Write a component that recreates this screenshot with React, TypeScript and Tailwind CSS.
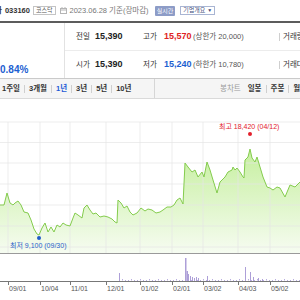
import React from 'react';

const FONT = "font-['Liberation_Sans','Noto_Sans_CJK_KR',sans-serif]";

const pts: [number, number][] = [
  [0, 205], [4, 205], [7, 193], [10, 203], [13, 205], [15, 203], [18, 201], [21, 205],
  [24, 212], [28, 213], [31, 220], [34, 229], [37, 234], [39, 235], [42, 228], [45, 223],
  [48, 232], [51, 227], [54, 232], [57, 225], [60, 227], [63, 223], [66, 225], [70, 226],
  [73, 218], [75, 213], [78, 215], [82, 218], [84, 208], [87, 205], [90, 210], [93, 214],
  [96, 213], [100, 217], [104, 216], [108, 217], [112, 219], [115, 222], [117, 223], [118, 200],
  [121, 203], [124, 208], [127, 206], [130, 212], [133, 215], [137, 213], [141, 208], [145, 211],
  [148, 209], [152, 210], [156, 213], [160, 212], [163, 210], [167, 207], [171, 207], [174, 205],
  [177, 200], [180, 198], [183, 204], [185, 163], [188, 167], [192, 172], [195, 170], [198, 177],
  [202, 172], [204, 177], [207, 162], [210, 170], [213, 180], [217, 193], [220, 182], [225, 177],
  [228, 172], [232, 170], [233, 167], [235, 170], [237, 168], [240, 172], [243, 177], [244, 178],
  [245, 160], [248, 157], [250, 149], [252, 158], [255, 162], [257, 157], [260, 167], [263, 177],
  [267, 187], [270, 188], [273, 190], [277, 187], [280, 188], [285, 197], [290, 185], [295, 187],
  [300, 182],
];

// x, top, width
const bars: [number, number, number][] = [
  [119, 273, 1], [185, 258, 1.5], [186.5, 271, 1.5], [188, 274, 1], [190, 276, 1], [192, 277, 1],
  [194, 278, 1], [196, 277, 1], [198, 278, 1], [207, 276, 1], [245, 267, 1], [250, 272, 1],
  [253, 277, 1], [258, 278, 1], [262, 279, 1],
];

const ticks = [8, 40, 70, 106, 140, 172, 203, 238, 270];
const labels = ['09/01', '10/04', '11/01', '12/01', '01/02', '02/01', '03/02', '04/03', '05/02'];
const hGrid = [122, 142.5, 163, 184, 205, 226, 247];

function Chart() {
  const line = pts.map(p => p.join(',')).join(' ');
  const area = `${line} 300,253 0,253`;
  const dust: number[] = [];
  for (let x = 122; x < 300; x += 3) dust.push(x);
  return (
    <svg width={300} height={201} viewBox="0 99 300 201" className="block">
      <defs>
        <linearGradient id="fill" x1="0" y1="149" x2="0" y2="253" gradientUnits="userSpaceOnUse">
          <stop offset="0" stopColor="#c6ef9f" />
          <stop offset="1" stopColor="#f6fcf1" />
        </linearGradient>
      </defs>
      <polygon points={area} fill="url(#fill)" />
      {hGrid.map(y => (
        <line key={y} x1={0} x2={300} y1={y} y2={y} stroke="#e6e6e6" strokeOpacity={0.7} />
      ))}
      {ticks.map(x => (
        <line key={x} x1={x} x2={x} y1={122} y2={253} stroke="#e6e6e6" strokeOpacity={0.7} />
      ))}
      <polyline points={line} fill="none" stroke="#84cc4d" strokeWidth={1} />
      <line x1={0} x2={300} y1={253.5} y2={253.5} stroke="#9a9a9a" />
      {dust.map((x, i) => (
        <rect key={x} x={x} y={280 - (i % 3 === 0 ? 1 : 0)} width={1} height={i % 3 === 0 ? 1.5 : 1} fill="#b9aee0" />
      ))}
      {bars.map(([x, t, w]) => (
        <rect key={x} x={x} y={t} width={w} height={281 - t} fill="#ad9fd8" />
      ))}
      <line x1={0} x2={300} y1={281.5} y2={281.5} stroke="#777" />
      {ticks.map(x => (
        <line key={x} x1={x + 0.5} x2={x + 0.5} y1={281} y2={285} stroke="#777" />
      ))}
      {ticks.map((x, i) => (
        <text key={x} x={x + 1} y={291} fontSize={7} fill="#555" fontFamily="Liberation Sans, sans-serif">
          {labels[i]}
        </text>
      ))}
      <circle cx={250} cy={134} r={2} fill="#e3202c" />
      <text x={219} y={128.5} fontSize={7} fill="#e3202c" fontFamily="Liberation Sans, Noto Sans CJK KR, sans-serif">
        최고 18,420 (04/12)
      </text>
      <circle cx={39} cy={238} r={2} fill="#1f5cc7" />
      <text x={10} y={247.5} fontSize={7} fill="#2a62c9" fontFamily="Liberation Sans, Noto Sans CJK KR, sans-serif">
        최저 9,100 (09/30)
      </text>
    </svg>
  );
}

const Sep = () => <span className="w-px h-[8px] bg-[#cfcfcf] shrink-0" />;

export default function App() {
  return (
    <div className={`w-[300px] h-[300px] overflow-hidden bg-white ${FONT}`}>
      {/* header */}
      <div className="h-[23px] flex items-center border-b-2 border-[#5c5c5c] text-[7.5px] whitespace-nowrap">
        <span className="-ml-[5px] text-[#333] font-bold">자</span>
        <span className="ml-[3px] text-[#333] font-bold">033160</span>
        <span className="ml-[3px] h-[9px] px-[2px] border border-[#c4c4c4] text-[6px] leading-[7px] text-[#555]">코스닥</span>
        <svg width="7" height="7" viewBox="0 0 7 7" className="ml-[4px]">
          <rect x="0.5" y="1.5" width="6" height="5" fill="none" stroke="#b5b5b5" />
          <line x1="0.5" x2="6.5" y1="3" y2="3" stroke="#b5b5b5" />
          <line x1="2" x2="2" y1="0" y2="2" stroke="#b5b5b5" />
          <line x1="5" x2="5" y1="0" y2="2" stroke="#b5b5b5" />
        </svg>
        <span className="ml-[3px] text-[#777]">2023.06.28 기준(장마감)</span>
        <span className="ml-[6px] h-[10px] px-[2px] rounded-[1px] bg-[#8d9cc7] text-white text-[6px] leading-[10px]">실시간</span>
        <span className="ml-[5px] h-[9px] px-[2px] border border-[#a9b5d3] text-[#3f4f7c] text-[6px] leading-[7px] flex items-center gap-[2px]">
          기업개요<span className="text-[5px]">▼</span>
        </span>
      </div>

      {/* info box */}
      <div className="h-[56px] flex border-b border-[#cacaca] whitespace-nowrap">
        <div className="w-[65px] shrink-0 border-r border-[#e2e2e2] pt-[33px]">
          <span className="text-[10px] leading-[13px] font-bold text-[#1d5fd1]">0.84%</span>
        </div>
        <div className="flex-1 flex flex-col">
          <div className="h-[28px] flex items-center border-b border-[#ececec] pl-[11px]">
            <span className="w-[19px] text-[7.5px] text-[#333]">전일</span>
            <span className="w-[48px] text-[9px] font-bold text-[#222]">15,390</span>
            <span className="w-[21px] text-[7.5px] text-[#333]">고가</span>
            <span className="w-[29px] text-[9px] font-bold text-[#e02323]">15,570</span>
            <span className="w-[86px] text-[7.5px] text-[#555]">(상한가 20,000)</span>
            <Sep />
            <span className="ml-[3px] text-[7.5px] text-[#333]">거래량</span>
          </div>
          <div className="h-[27px] flex items-center pl-[11px]">
            <span className="w-[19px] text-[7.5px] text-[#333]">시가</span>
            <span className="w-[48px] text-[9px] font-bold text-[#222]">15,390</span>
            <span className="w-[21px] text-[7.5px] text-[#333]">저가</span>
            <span className="w-[29px] text-[9px] font-bold text-[#1d5fd1]">15,240</span>
            <span className="w-[86px] text-[7.5px] text-[#555]">(하한가 10,780)</span>
            <Sep />
            <span className="ml-[3px] text-[7.5px] text-[#333]">거래대금</span>
          </div>
        </div>
      </div>

      {/* period tabs */}
      <div className="h-[20px] flex bg-[#f5f5f5] border-b border-[#dadada] whitespace-nowrap text-[7.5px]">
        <div className="w-[155px] shrink-0 border-r border-[#d6d6d6] flex items-center gap-[4px] pl-[2px] font-bold text-[#333]">
          <span>1주일</span>
          <Sep />
          <span>3개월</span>
          <Sep />
          <span className="text-[#1e5ad6]">1년</span>
          <Sep />
          <span>3년</span>
          <Sep />
          <span>5년</span>
          <Sep />
          <span>10년</span>
        </div>
        <div className="flex-1 flex items-center pl-[65px] gap-[4px]">
          <span className="text-[#9a9a9a] mr-[3px]">봉차트</span>
          <span className="font-bold text-[#333]">일봉</span>
          <Sep />
          <span className="font-bold text-[#333]">주봉</span>
          <Sep />
          <span className="font-bold text-[#333]">월봉</span>
        </div>
      </div>

      <Chart />
    </div>
  );
}
